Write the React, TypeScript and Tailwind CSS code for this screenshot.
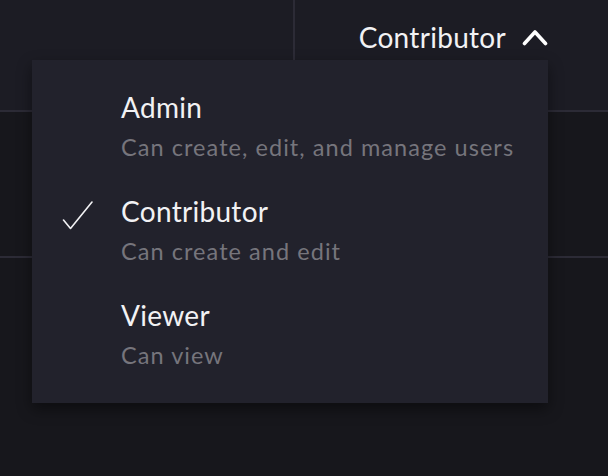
import React from "react";

const items = [
  { title: "Admin", desc: "Can create, edit, and manage users", checked: false },
  { title: "Contributor", desc: "Can create and edit", checked: true },
  { title: "Viewer", desc: "Can view", checked: false },
];

export default function App() {
  return (
    <div
      className="relative w-[608px] h-[476px] overflow-hidden bg-[#17171c] flex flex-col"
      style={{ fontFamily: "Lato, 'Noto Sans', sans-serif" }}
    >
      <div className="h-[110px] flex bg-[#1c1c24]">
        <div className="w-[295px] border-r-2 border-[#2c2b36]" />
        <div className="flex-1 flex items-start justify-end pr-[60px] pt-[19px]">
          <button className="flex items-center gap-[16px] text-[#f2f2f4] text-[28px] leading-[36px] tracking-[0.3px]">
            <span>Contributor</span>
            <svg width="26" height="18" viewBox="0 0 26 18" fill="none">
              <path d="M2.5 15.5 L13 4 L23.5 15.5" stroke="#ffffff" strokeWidth="3.6" strokeLinecap="round" strokeLinejoin="round" />
            </svg>
          </button>
        </div>
      </div>
      <div className="h-[2px] bg-[#2c2b36]" />
      <div className="h-[144px]" />
      <div className="h-[2px] bg-[#2c2b36]" />
      <div className="flex-1" />

      <div className="absolute left-[32px] top-[60px] w-[516px] h-[343px] bg-[#22222c] shadow-[0_6px_14px_rgba(0,0,0,0.45)] pt-[27px] pb-[28px] flex flex-col gap-[24px]">
        {items.map((it) => (
          <div key={it.title} className="relative pl-[89px]">
            {it.checked && (
              <svg className="absolute left-[30px] top-[10px]" width="32" height="30" viewBox="0 0 32 30" fill="none">
                <path d="M1.5 19 L8.5 27.5 L30 1" stroke="#f2f2f4" strokeWidth="1.6" strokeLinecap="round" strokeLinejoin="round" />
              </svg>
            )}
            <div className="text-[28px] leading-[40px] text-[#f2f2f4] tracking-[0.3px]">{it.title}</div>
            <div className="text-[23.5px] leading-[40px] text-[#76757c] tracking-[1.05px]">{it.desc}</div>
          </div>
        ))}
      </div>
    </div>
  );
}
